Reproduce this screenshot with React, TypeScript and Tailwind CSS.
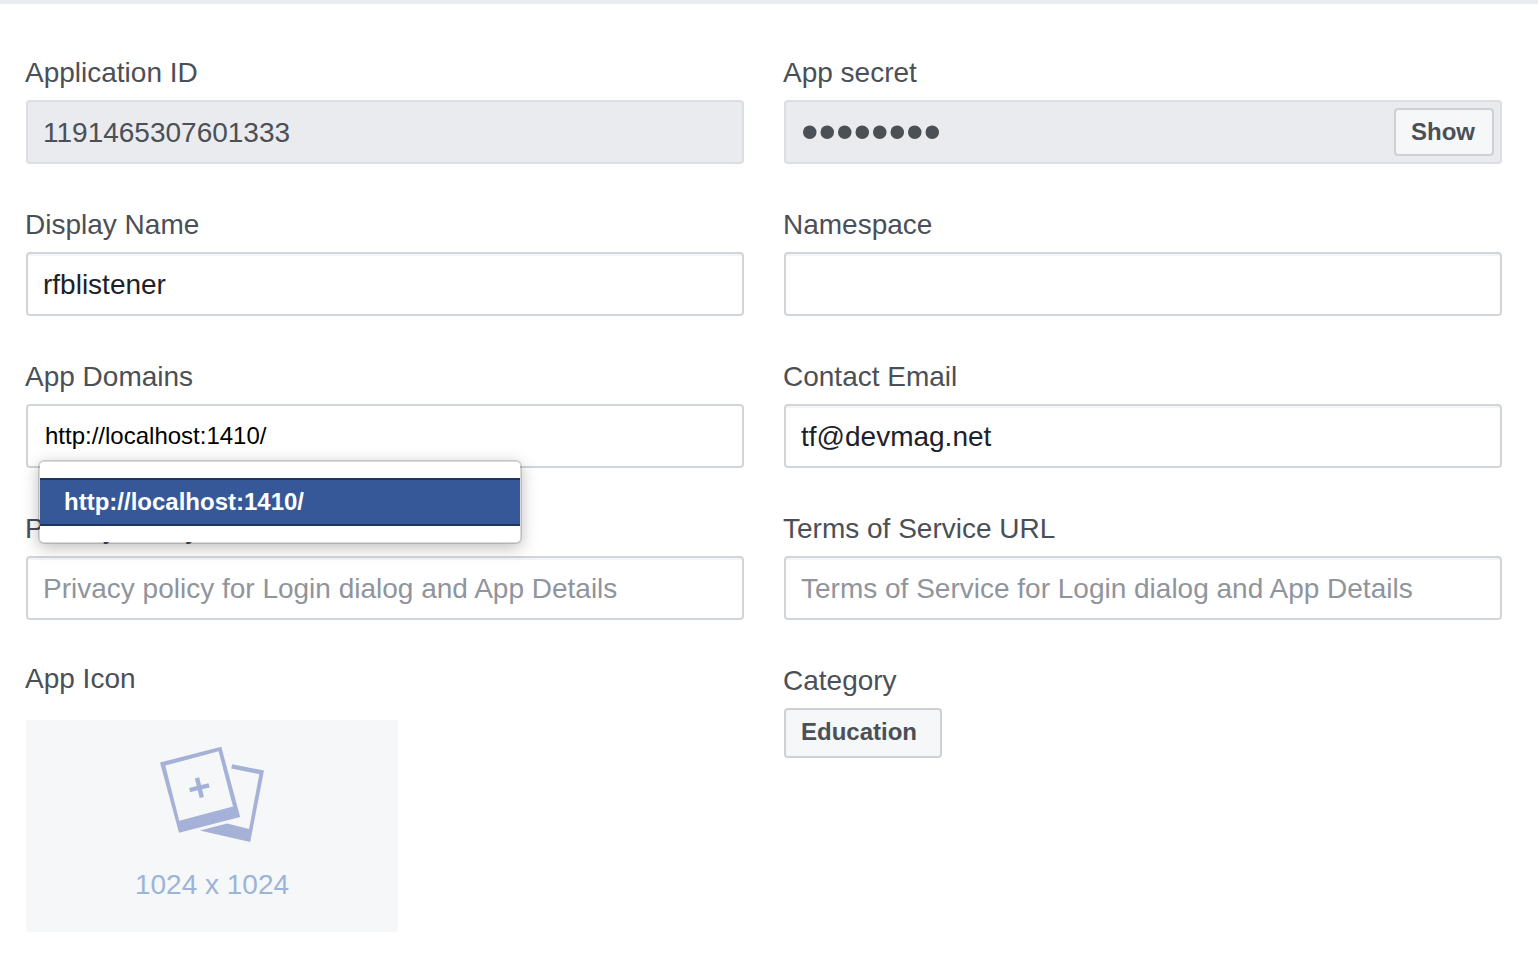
import { useState, type InputHTMLAttributes, type ReactNode } from "react";

const LABEL = "block pl-px text-[28px] leading-[38px] mb-2";
const BOX = "block h-16 w-full rounded border-2 outline-none";
const EDITABLE = "border-[#d1d5da] bg-white px-[15px] pt-0.5 shadow-[inset_0_2px_0_#f3f4f5]";
const READONLY = "border-[#dcdee3] bg-[#e9ebee] px-[15px] text-[#4b4f56]";
const BUTTON =
  "rounded-[4px] border-2 border-[#ced0d4] bg-[#f6f7f9] px-[15px] text-left text-2xl font-bold text-[#4b4f56]";

type FieldProps = InputHTMLAttributes<HTMLInputElement> & {
  id: string;
  label: string;
  look: string;
  children?: ReactNode;
};

function Field({ id, label, look, children, ...input }: FieldProps) {
  return (
    <div>
      <label htmlFor={id} className={LABEL}>
        {label}
      </label>
      <div className="relative pl-0.5">
        <input id={id} className={`${BOX} ${look}`} {...input} />
        {children}
      </div>
    </div>
  );
}

function PhotosIcon() {
  return (
    <svg width="104" height="98" viewBox="0 0 104 98" fill="#a5b1d6" aria-hidden="true">
      <path
        fillRule="evenodd"
        d="M0 16.5 61.3 .8 80.2 71 19 86.7ZM5.3 19.6 19.3 74.8 73 60.4 58.6 5.3Z"
      />
      <path d="M72.2 18.2 104 24.5 90.2 96 39.8 84.4 67 77.6 89 83 99.3 28.2 71.2 22.4Z" />
      <path
        d="M37.2 31.6H41.6V39.5H49.4V43.9H41.6V51.8H37.2V43.9H29.4V39.5H37.2Z"
        transform="rotate(-13.5 39.4 41.7)"
      />
    </svg>
  );
}

export default function App() {
  const [shown, setShown] = useState(false);
  const text = "text-[28px] text-[#1d2129]";
  const hint = "text-[28px] text-[#1d2129] placeholder:text-[#90949c] placeholder:opacity-100";

  return (
    <main className="border-t-4 border-[#e9ebee] bg-white font-['Liberation_Sans',Arial,sans-serif] text-[#4b4f56]">
      <form
        className="grid grid-cols-2 gap-x-[38px] gap-y-[42px] pt-[50px] pr-9 pb-[30px] pl-6"
        onSubmit={(e) => e.preventDefault()}
      >
        <Field
          id="app-id"
          label="Application ID"
          look={`${READONLY} pt-0.5 text-[28px]`}
          readOnly
          defaultValue="1191465307601333"
        />
        <Field
          id="secret"
          label="App secret"
          look={`${READONLY} ${shown ? "text-[28px]" : "text-[50px]"}`}
          type={shown ? "text" : "password"}
          readOnly
          defaultValue="password"
        >
          <button
            type="button"
            className={`${BUTTON} absolute top-2 right-2 h-12 w-[100px]`}
            onClick={() => setShown(!shown)}
          >
            Show
          </button>
        </Field>

        <Field
          id="display-name"
          label="Display Name"
          look={`${EDITABLE} ${text}`}
          defaultValue="rfblistener"
        />
        <Field id="namespace" label="Namespace" look={`${EDITABLE} ${text}`} />

        <Field
          id="domains"
          label="App Domains"
          look="border-[#d1d5da] bg-white px-[17px] text-2xl text-black"
          defaultValue="http://localhost:1410/"
          autoComplete="off"
        >
          <ul
            role="listbox"
            aria-label="App Domains"
            className="absolute top-14 left-3.5 z-10 w-[484px] rounded-md border-2 border-black/15 bg-white bg-clip-padding py-4 shadow-[0_4px_16px_rgba(0,0,0,0.25)]"
          >
            <li
              role="option"
              aria-selected="true"
              className="h-12 border-y-2 border-[#203660] bg-[#365899] px-6 text-2xl leading-11 font-bold text-white"
            >
              http://localhost:1410/
            </li>
          </ul>
        </Field>
        <Field
          id="email"
          label="Contact Email"
          look={`${EDITABLE} ${text}`}
          defaultValue="tf@devmag.net"
        />

        <Field
          id="privacy"
          label="Privacy Policy URL"
          look={`${EDITABLE} ${hint}`}
          placeholder="Privacy policy for Login dialog and App Details"
        />
        <Field
          id="terms"
          label="Terms of Service URL"
          look={`${EDITABLE} ${hint}`}
          placeholder="Terms of Service for Login dialog and App Details"
        />

        <div>
          <h2 id="icon-label" className="mb-6 pl-px text-[28px] leading-[34px]">
            App Icon
          </h2>
          <button
            type="button"
            aria-describedby="icon-label"
            className="ml-0.5 flex h-[212px] w-[372px] flex-col items-center bg-[#f6f7f9] pt-[26px] text-[28px] leading-[38px] text-[#9cb4d8]"
          >
            <PhotosIcon />
            <span className="mt-[22px]">1024 x 1024</span>
          </button>
        </div>
        <div>
          <label htmlFor="category" className={LABEL}>
            Category
          </label>
          <button id="category" type="button" className={`${BUTTON} ml-0.5 h-[50px] w-[158px] pb-0.5`}>
            Education
          </button>
        </div>
      </form>
    </main>
  );
}
